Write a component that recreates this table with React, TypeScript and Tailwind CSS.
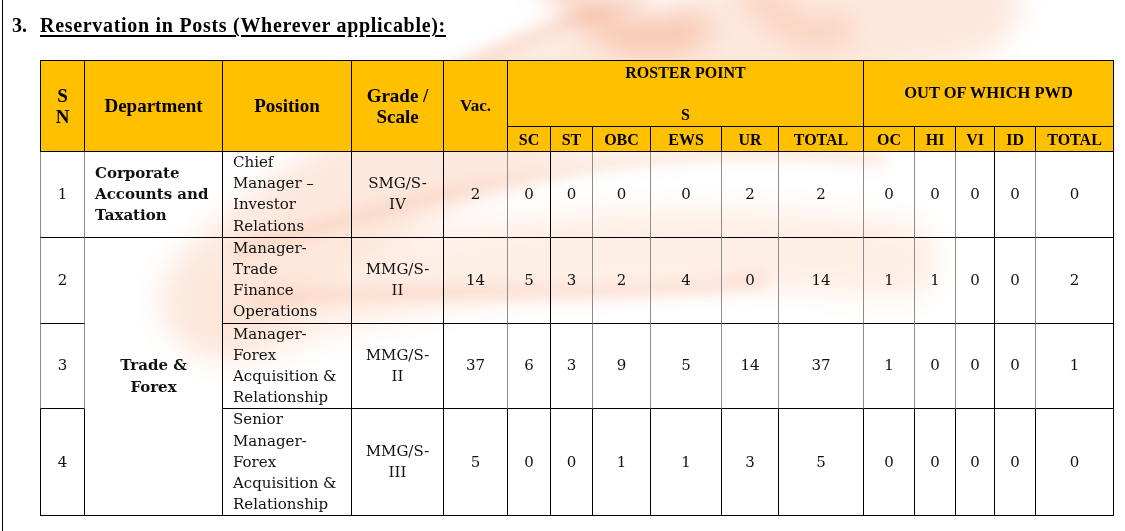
import React from "react";

const bodyFont = "font-['DejaVu_Serif',serif]";
const headFont = "font-['Liberation_Serif',serif]";

type Row = {
  sn: string;
  position: string[];
  grade: string[];
  vac: number;
  roster: number[];
  pwd: number[];
};

const rows: Row[] = [
  {
    sn: "1",
    position: ["Chief", "Manager –", "Investor", "Relations"],
    grade: ["SMG/S-", "IV"],
    vac: 2,
    roster: [0, 0, 0, 0, 2, 2],
    pwd: [0, 0, 0, 0, 0],
  },
  {
    sn: "2",
    position: ["Manager-", "Trade", "Finance", "Operations"],
    grade: ["MMG/S-", "II"],
    vac: 14,
    roster: [5, 3, 2, 4, 0, 14],
    pwd: [1, 1, 0, 0, 2],
  },
  {
    sn: "3",
    position: ["Manager-", "Forex", "Acquisition &", "Relationship"],
    grade: ["MMG/S-", "II"],
    vac: 37,
    roster: [6, 3, 9, 5, 14, 37],
    pwd: [1, 0, 0, 0, 1],
  },
  {
    sn: "4",
    position: ["Senior", "Manager-", "Forex", "Acquisition &", "Relationship"],
    grade: ["MMG/S-", "III"],
    vac: 5,
    roster: [0, 0, 1, 1, 3, 5],
    pwd: [0, 0, 0, 0, 0],
  },
];

// column widths in px, SN .. PWD total
const widths = [44, 138, 129, 92, 64, 43, 42, 58, 71, 57, 85, 51, 41, 39, 41, 78];

// right edges drawn grey in the first three body rows (pdf render artefact)
const greyRight = new Set([0, 4, 6, 7, 8, 9, 10, 11, 12, 14]);

function Lines({ lines }: { lines: string[] }) {
  return (
    <>
      {lines.map((l, i) => (
        <div key={i}>{l}</div>
      ))}
    </>
  );
}

function Watermark() {
  return (
    <svg
      className="pointer-events-none absolute left-0 top-0"
      width="1125"
      height="531"
      viewBox="0 0 1125 531"
    >
      <defs>
        <filter id="soft" x="-20%" y="-20%" width="140%" height="140%">
          <feGaussianBlur stdDeviation="14" />
        </filter>
        <filter id="soft2" x="-20%" y="-20%" width="140%" height="140%">
          <feGaussianBlur stdDeviation="7" />
        </filter>
      </defs>
      <g filter="url(#soft)" fill="none" strokeLinecap="round">
        <path d="M220 300 C 380 140, 620 60, 960 0" stroke="#fbd9c6" strokeWidth="120" opacity="0.6" />
        <path d="M250 320 C 420 260, 650 230, 900 260" stroke="#fde4d6" strokeWidth="80" opacity="0.6" />
        <path d="M560 -20 C 600 30, 640 50, 690 30" stroke="#f29a74" strokeWidth="40" opacity="0.4" />
        <path d="M750 -20 C 770 20, 800 40, 840 30" stroke="#f4a884" strokeWidth="30" opacity="0.35" />
      </g>
      <g filter="url(#soft2)" fill="none" strokeLinecap="round">
        <path d="M240 250 C 420 200, 640 130, 880 160" stroke="#f6b596" strokeWidth="14" opacity="0.3" />
        <path d="M260 300 C 440 285, 620 300, 760 280" stroke="#f5ad8c" strokeWidth="14" opacity="0.28" />
        <path d="M380 110 C 480 60, 560 20, 640 0" stroke="#f19872" strokeWidth="18" opacity="0.25" />
      </g>
    </svg>
  );
}

export default function App() {
  return (
    <div className="relative h-[531px] w-[1125px] overflow-hidden bg-white text-black">
      <Watermark />
      <div className="relative ml-[2px] h-full border-l border-black pl-[9px]">
        <div className={`${headFont} flex pt-[12px] text-[20px] font-bold leading-[26px]`}>
          <span className="w-[28px]">3.</span>
          <span className="underline decoration-2 underline-offset-[3px] tracking-[0.7px]">
            Reservation in Posts (Wherever applicable):
          </span>
        </div>

        <table className="mt-[22px] ml-[28px] w-[1074px] table-fixed border-separate border-spacing-0">
          <colgroup>
            {widths.map((w, i) => (
              <col key={i} style={{ width: w + (i === 0 ? 1 : 0) }} />
            ))}
          </colgroup>
          <thead className={`${headFont} bg-[#ffc000] font-bold`}>
            <tr className="h-[67px]">
              <th rowSpan={2} className="border border-black align-middle text-[19px] leading-[21px]">
                S<br />N
              </th>
              <th rowSpan={2} className="border-y border-r border-black align-middle text-[19px]">
                Department
              </th>
              <th rowSpan={2} className="border-y border-r border-black align-middle text-[19px]">
                Position
              </th>
              <th rowSpan={2} className="border-y border-r border-black align-middle text-[19px] leading-[21px]">
                Grade /<br />Scale
              </th>
              <th rowSpan={2} className="border-y border-r border-black align-middle text-[17px]">
                Vac.
              </th>
              <th colSpan={6} className="border-y border-r border-black pt-[1px] align-top text-[16px] leading-[21px]">
                ROSTER POINT
                <br />
                <br />S
              </th>
              <th colSpan={5} className="border-y border-r border-black align-middle text-[16.5px]">
                OUT OF WHICH PWD
              </th>
            </tr>
            <tr className="h-[25px] text-[16px]">
              {["SC", "ST", "OBC", "EWS", "UR", "TOTAL", "OC", "HI", "VI", "ID", "TOTAL"].map((h, i) => (
                <th key={i} className="border-b border-r border-black p-0 align-middle leading-[21px]">
                  {h}
                </th>
              ))}
            </tr>
          </thead>
          <tbody className={`${bodyFont} text-[15px] leading-[21.2px] text-[#111]`}>
            {rows.map((r, ri) => {
              const grey = ri < 3;
              const rc = (col: number) =>
                `border-b border-r ${grey && greyRight.has(col) ? "border-r-[#8c8c8c]" : "border-r-black"} border-b-black`;
              const nums = [r.vac, ...r.roster, ...r.pwd];
              return (
                <tr key={r.sn}>
                  <td
                    className={`${rc(0)} border-l ${grey ? "border-l-[#8c8c8c]" : "border-l-black"} p-0 text-center align-middle`}
                  >
                    {r.sn}
                  </td>
                  {ri === 0 && (
                    <td className={`${rc(1)} p-0 pl-[10px] align-middle font-bold`}>
                      <Lines lines={["Corporate", "Accounts and", "Taxation"]} />
                    </td>
                  )}
                  {ri === 1 && (
                    <td rowSpan={3} className="border-b border-r border-black p-0 text-center align-middle font-bold">
                      <Lines lines={["Trade &", "Forex"]} />
                    </td>
                  )}
                  <td className={`${rc(2)} p-0 pl-[10px] align-middle`}>
                    <Lines lines={r.position} />
                  </td>
                  <td className={`${rc(3)} p-0 text-center align-middle`}>
                    <Lines lines={r.grade} />
                  </td>
                  {nums.map((n, ni) => (
                    <td key={ni} className={`${rc(ni + 4)} p-0 text-center align-middle`}>
                      {n}
                    </td>
                  ))}
                </tr>
              );
            })}
          </tbody>
        </table>
      </div>
    </div>
  );
}
